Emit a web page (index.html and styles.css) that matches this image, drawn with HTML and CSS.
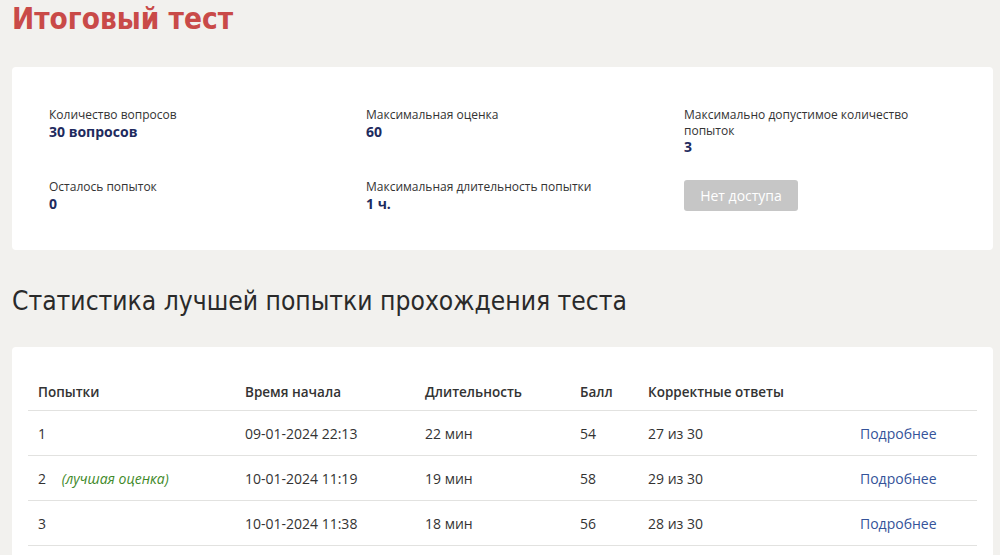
FILE: index.html
```html
<!DOCTYPE html>
<html lang="ru">
<head>
<meta charset="utf-8">
<link rel="stylesheet" href="styles.css">
</head>
<body>
<h1 class="page-title">Итоговый тест</h1>
<section class="card info-card">
  <div class="info-grid">
    <div class="info-item">
      <div class="info-label">Количество вопросов</div>
      <div class="info-value">30 вопросов</div>
    </div>
    <div class="info-item">
      <div class="info-label">Максимальная оценка</div>
      <div class="info-value">60</div>
    </div>
    <div class="info-item">
      <div class="info-label">Максимально допустимое количество попыток</div>
      <div class="info-value">3</div>
    </div>
    <div class="info-item">
      <div class="info-label">Осталось попыток</div>
      <div class="info-value">0</div>
    </div>
    <div class="info-item">
      <div class="info-label">Максимальная длительность попытки</div>
      <div class="info-value">1 ч.</div>
    </div>
    <div class="info-item">
      <button class="btn-disabled" disabled>Нет доступа</button>
    </div>
  </div>
</section>
<h2 class="section-title">Статистика лучшей попытки прохождения теста</h2>
<section class="card table-card">
  <table class="attempts">
    <thead>
      <tr>
        <th class="c-num">Попытки</th>
        <th class="c-start">Время начала</th>
        <th class="c-dur">Длительность</th>
        <th class="c-score">Балл</th>
        <th class="c-correct">Корректные ответы</th>
        <th class="c-link"></th>
      </tr>
    </thead>
    <tbody>
      <tr>
        <td>1</td>
        <td>09-01-2024 22:13</td>
        <td>22 мин</td>
        <td>54</td>
        <td>27 из 30</td>
        <td><a href="#">Подробнее</a></td>
      </tr>
      <tr>
        <td>2 <span class="best">(лучшая оценка)</span></td>
        <td>10-01-2024 11:19</td>
        <td>19 мин</td>
        <td>58</td>
        <td>29 из 30</td>
        <td><a href="#">Подробнее</a></td>
      </tr>
      <tr>
        <td>3</td>
        <td>10-01-2024 11:38</td>
        <td>18 мин</td>
        <td>56</td>
        <td>28 из 30</td>
        <td><a href="#">Подробнее</a></td>
      </tr>
    </tbody>
  </table>
</section>
</body>
</html>
```
FILE: styles.css
```css
html, body {
  margin: 0;
  padding: 0;
}
body {
  background: #f2f1ee;
  font-family: "Open Sans", "Noto Sans", sans-serif;
  color: #333;
  padding: 0 7px 0 12px;
}
.page-title {
  margin: 0;
  padding-top: 2px;
  font-family: "DejaVu Sans Condensed", "DejaVu Sans", sans-serif;
  font-weight: bold;
  font-size: 29.5px;
  line-height: 34px;
  color: #c94a48;
}
.card {
  background: #fff;
  border-radius: 4px;
}
.info-card {
  margin-top: 31px;
  padding: 40px 0 37px 37px;
}
.info-grid {
  display: grid;
  grid-template-columns: 317px 318px 240px;
  row-gap: 23px;
}
.info-label {
  font-size: 12px;
  line-height: 15.5px;
  color: #333;
}
.info-value {
  font-size: 14px;
  line-height: 18px;
  font-weight: bold;
  color: #1e2b5e;
}
.btn-disabled {
  display: block;
  margin-top: 1px;
  width: 114px;
  height: 31px;
  border: none;
  border-radius: 3px;
  background: #c6c6c6;
  color: #fff;
  font-family: "Open Sans", sans-serif;
  font-size: 14px;
  padding: 0;
}
.section-title {
  margin: 35px 0 0 0;
  font-family: "DejaVu Sans Condensed", "DejaVu Sans", sans-serif;
  font-weight: normal;
  font-size: 26.2px;
  line-height: 32px;
  color: #2a2a2a;
}
.table-card {
  margin-top: 30px;
  padding: 27px 16px 20px 16px;
}
.attempts {
  width: 100%;
  border-collapse: collapse;
  font-size: 14px;
}
.attempts th {
  text-align: left;
  font-weight: 600;
  font-size: 13.5px;
  padding: 0 10px;
  height: 36px;
  border-bottom: 1px solid #e2e2e0;
  vertical-align: middle;
}
.attempts td {
  padding: 2px 10px 0 10px;
  height: 42px;
  border-bottom: 1px solid #e2e2e0;
  vertical-align: middle;
}
.c-num { width: 187px; }
.c-start { width: 160px; }
.c-dur { width: 135px; }
.c-score { width: 48px; }
.c-correct { width: 192px; }
.best {
  font-style: italic;
  color: #3f8a2a;
  margin-left: 12px;
}
.attempts a {
  color: #34539a;
  text-decoration: none;
}
```
